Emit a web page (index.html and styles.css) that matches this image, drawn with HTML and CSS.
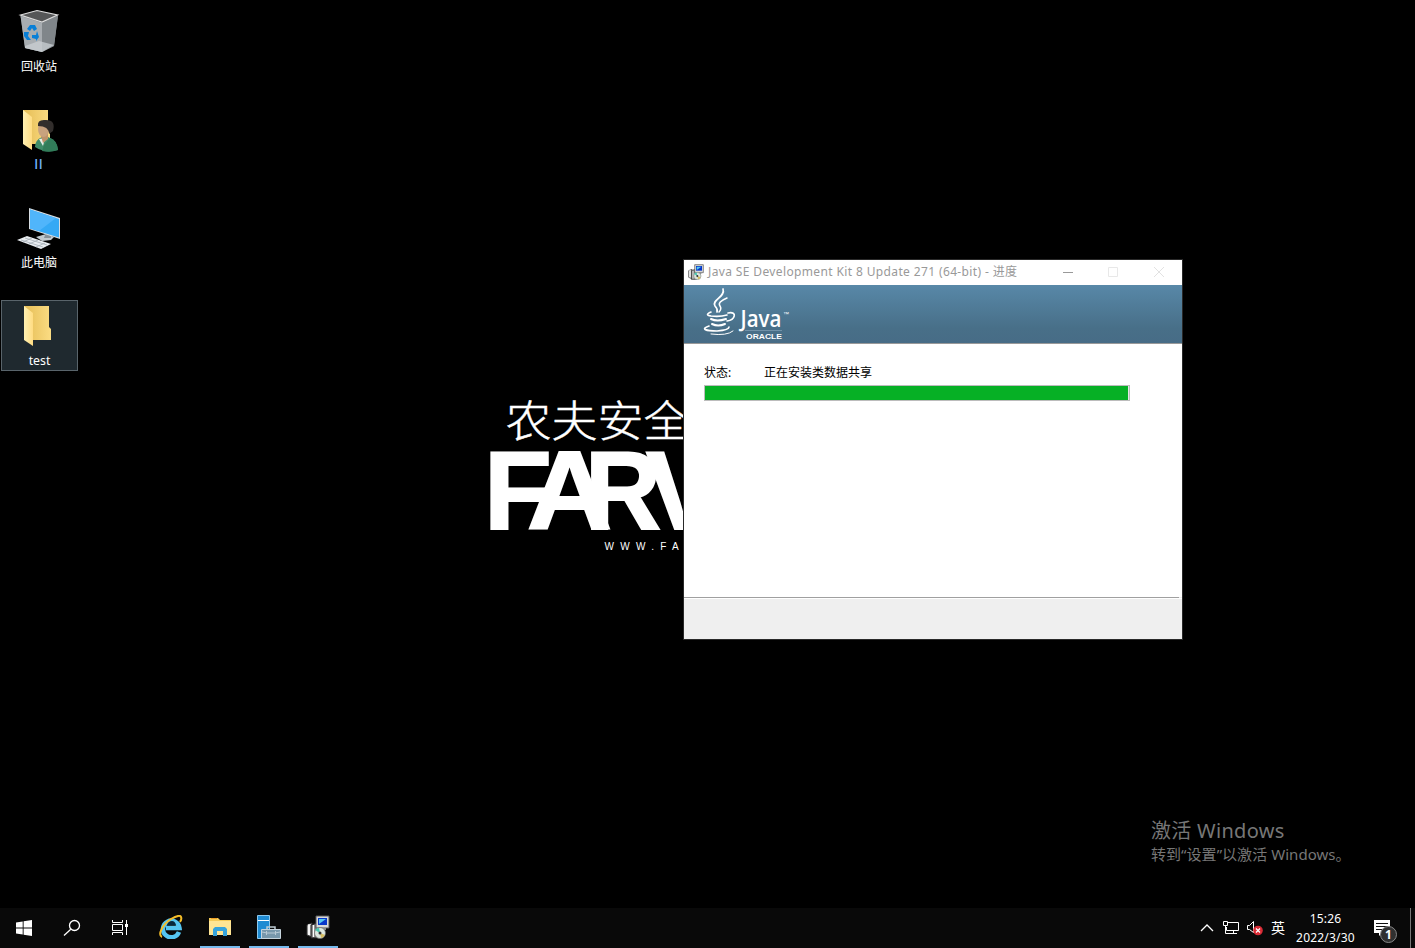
FILE: index.html
```html
<!DOCTYPE html>
<html lang="zh-CN">
<head>
<meta charset="utf-8">
<title>Java SE Development Kit</title>
<link rel="stylesheet" href="styles.css">
</head>
<body>
<svg class="defs" width="0" height="0" aria-hidden="true">
  <defs>
    <linearGradient id="gold" x1="0" x2="1"><stop offset="0" stop-color="#e5bd55"/><stop offset="1" stop-color="#fbdc83"/></linearGradient>
    <linearGradient id="flap" x1="0" x2="1"><stop offset="0" stop-color="#fff0b2"/><stop offset="1" stop-color="#ffdc82"/></linearGradient>
    <symbol id="folder" viewBox="0 0 44 44">
      <path d="M6 1H31V22L33 24V35H12L6 30Z" fill="url(#gold)"/>
      <path d="M6 1L15 8V41L6 35Z" fill="url(#flap)"/>
    </symbol>
    <symbol id="installer" viewBox="0 0 24 24">
      <path d="M1 10L6 8V22L1 20Z" fill="#dedede" stroke="#333"/>
      <path d="M5 10L11 8L13 10V23H5Z" fill="#777" stroke="#222"/>
      <path d="M3 9V20M7.5 10V22" stroke="#fff" stroke-width="1.4"/>
      <path d="M10 1H23V13H10Z" fill="#d8d8d8" stroke="#555"/>
      <path d="M12 3H21V10H12Z" fill="#0736c9"/><path d="M13 9L20 4H13Z" fill="#55c8ef"/>
      <path d="M14 13H20V15H14Z" fill="#888"/>
      <circle cx="14" cy="18" r="5.5" fill="#dce6df" stroke="#666" stroke-width=".7"/>
      <path d="M14 18L9 15A5 5 0 0 1 13 12.7Z" fill="#48c8b1"/><path d="M14 18L19 20A5 5 0 0 1 15 23Z" fill="#d5bd61"/>
      <circle cx="14" cy="18" r="1.5" fill="#333"/>
    </symbol>
  </defs>
</svg>
<main class="desktop">
  <nav class="shortcuts">
    <div class="shortcut">
      <svg class="shortcut-icon" viewBox="0 0 44 44">
        <path d="M3.500 6L24 13L41 6L37 37L25 43L8 39Z" fill="#858a8e"/>
        <path d="M3.500 6L20 1.500L40.500 6L25 13Z" fill="#555657" stroke="#ddd" stroke-width="1.2"/>
        <path d="M3.500 7L25 14V43L8 39Z" fill="#a8adb1"/><path d="M25 14L41 7L37 37L25 43Z" fill="#80868a"/>
        <path d="M8 37L22 32L37 36L25 43L8 39Z" fill="#cbd0d4" opacity=".75"/>
        <g fill="#087fd7"><path d="M10 20L13 16H18L20 20L17 22L15 19L13 22Z"/><path d="M7 23L12 23L11 27L14 31H10L7 27Z"/><path d="M20 22L22 28L19 32V30L15 29V26H19Z"/></g>
      </svg><span>回收站</span>
    </div>
    <div class="shortcut lower">
      <svg class="shortcut-icon" viewBox="0 0 44 44"><use href="#folder" width="44" height="44"/>
        <path d="M18 41Q17 31 25 28L31 28Q40 31 41 41Q29 45 18 38Z" fill="#3f8c69"/>
        <path d="M22 30L26 37L28 29Z" fill="#e7eeea"/><path d="M24 27L31 24L31 30L26 34Z" fill="#bd926a"/>
        <ellipse cx="26.500" cy="20" rx="5.500" ry="8" fill="#c8a27e"/>
        <path d="M21 17Q20 10 29 11Q39 11 36 22L32 25Q32 17 21 17Z" fill="#322e2c"/>
        <path d="M27 36L33 29Q40 31 41 41Q33 44 25 42Z" fill="#317c59"/>
      </svg><span class="user-name">ll</span>
    </div>
    <div class="shortcut lower">
      <svg class="shortcut-icon" viewBox="0 0 44 44">
        <path d="M19 30L29 27L37 30L34 33L25 34Z" fill="#c0c9cf"/><path d="M29 25L34 28V31H27Z" fill="#859199"/>
        <path d="M12 1L43 11V32L12 22Z" fill="#d7dde2"/><path d="M13 2.500L42 12V30.500L13 21.500Z" fill="#35a9f5"/>
        <path d="M13 2.500L39 11L22 24L13 21.500Z" fill="#50b5fb"/>
        <path d="M0 33L10 29L34 37L24 42Z" fill="#e9edf1"/>
        <path d="M4 33L26 40M8 31L30 38M6 35L15 31M12 37L21 33M19 40L28 36" stroke="#a5adb5" stroke-width=".8"/>
      </svg><span>此电脑</span>
    </div>
    <div class="shortcut selected"><svg class="shortcut-icon" viewBox="0 0 44 44"><use href="#folder" width="44" height="44"/></svg><span>test</span></div>
  </nav>

  <svg class="wallpaper" viewBox="0 0 204 175">
    <text class="brand-cn" transform="translate(25.5 51.5) scale(1 .93)" textLength="184" lengthAdjust="spacing">农夫安全</text>
    <g class="brand">
      <text x="4" y="144">F</text>
      <text x="47" y="144" textLength="85" lengthAdjust="spacingAndGlyphs">A</text>
      <text x="105" y="144" textLength="76" lengthAdjust="spacingAndGlyphs">R</text>
      <text x="166" y="144">V</text>
    </g>
    <text class="brand-url" x="124.500" y="164.500">WWW.FA</text>
  </svg>

  <section class="window">
    <header class="titlebar">
      <svg class="title-icon"><use href="#installer" width="16" height="16"/></svg>
      <span class="title">Java SE Development Kit 8 Update 271 (64-bit) - 进度</span>
      <svg class="controls" viewBox="0 0 114 24"><path d="M4 12.500H14" stroke="#999"/><path d="M49.500 7.500H58.500V16.500H49.500Z" fill="none" stroke="#e8e8e8"/><path d="M95 7L105 17M105 7L95 17" stroke="#e2e2e2"/></svg>
    </header>
    <div class="banner">
      <svg class="java-logo" viewBox="0 0 90 54">
        <g fill="none" stroke="#fff" stroke-linecap="round">
          <path d="M21 2C24 10 9 13 13 19Q16 22 15 25" stroke-width="1.700"/>
          <path d="M25 11Q15 15 18 19Q20 22 17 25" stroke-width="1.500"/>
          <path d="M9 25Q2 28 9 29Q18 30 25 28" stroke-width="1.600"/>
          <path d="M26 26C36 24 33 33 25 34" stroke-width="1.700"/>
          <path d="M9 32Q15 35 24 32M10 37Q16 40 23 37" stroke-width="2"/>
          <path d="M7 39C-2 42 4 44 15 44Q27 43 27 40" stroke-width="1.700"/>
          <path d="M9 47Q25 49 31 44" stroke-width="1"/>
        </g>
        <text class="java-word" x="38.500" y="40" textLength="41" lengthAdjust="spacingAndGlyphs">Java</text>
        <text class="java-tm" x="81" y="29">™</text>
        <path d="M43 43.500H80" stroke="#84a2b6" stroke-width=".7"/>
        <text class="oracle" x="44" y="51.500" textLength="36" lengthAdjust="spacingAndGlyphs">ORACLE</text>
      </svg>
    </div>
    <div class="content">
      <div class="status"><span>状态:</span><span>正在安装类数据共享</span></div>
      <div class="progress"><div class="progress-fill"></div></div>
    </div>
    <footer class="window-footer"></footer>
  </section>

  <aside class="activation"><div class="activation-title">激活 Windows</div><div class="activation-hint">转到“设置”以激活 Windows。</div></aside>
</main>

<footer class="taskbar">
  <div class="task-item"><svg width="16" height="16" fill="#fff"><path d="M0 2.400L6.700 1.400V7.500H0ZM7.600 1.200L16 0V7.500H7.600ZM0 8.500H6.700V14.600L0 13.600ZM7.600 8.500H16V16L7.600 14.800Z"/></svg></div>
  <div class="task-item"><svg width="18" height="18" fill="none" stroke="#fff" stroke-width="1.3"><circle cx="11.500" cy="6.500" r="5"/><path d="M7.800 10.300L1 16.500"/></svg></div>
  <div class="task-item"><svg width="18" height="16" fill="none" stroke="#fff"><path d="M1.500 0V2.500H11.500V0M1.500 15V12.500H11.500V15M1.500 4.500H11.500V10.500H1.500ZM15.500 0V15"/><path d="M14 4H17V7H14Z" fill="#fff" stroke="none"/></svg></div>
  <div class="task-item ie"><svg width="24" height="24" viewBox="0 0 24 24"><path d="M20 17A8.300 8.300 0 1 1 20.500 13H7" fill="none" stroke="#55c5f1" stroke-width="4.500"/><path d="M8 10Q9 6 13 6Q16 6 17 10Z" fill="#07283d"/><path d="M3 22C-2 20 4 9 12 4Q21-1 22 2Q23 4 21 7" fill="none" stroke="#f5bd28" stroke-width="2"/></svg></div>
  <div class="task-item open"><svg width="22" height="20"><path d="M0 1H9L11 3H22V18H0Z" fill="#f6cb58"/><path d="M0 4H22V18H0Z" fill="#ffe594"/><path d="M4 19V12L6 10H16L18 12V19H14V14H8V19Z" fill="#36a3dc"/><path d="M2 1.500H8" stroke="#ed9e23"/></svg></div>
  <div class="task-item open"><svg width="24" height="24"><path d="M.5.5H12.500V23.500H.5Z" fill="#1f8bd2" stroke="#8bc8ee"/><path d="M1 5.500H12" stroke="#fff"/><path d="M10 14V12H18V14" fill="none" stroke="#bdcbd4" stroke-width="1.5"/><path d="M4.500 14.500H23.500V23.500H4.500Z" fill="#7898ac" stroke="#c6d4dd"/><path d="M5 17L10 18H18L23 17M9.500 16V20M18.500 16V20" fill="none" stroke="#b8cad5"/></svg></div>
  <div class="task-item open"><svg width="24" height="24"><use href="#installer" width="24" height="24"/></svg></div>
  <div class="tray">
    <svg class="chevron" width="14" height="10" fill="none" stroke="#fff" stroke-width="1.3"><path d="M1 8L7 2L13 8"/></svg>
    <svg class="network" width="18" height="16" fill="none" stroke="#fff"><path d="M6 2.500H16.500V10.500H4.500V7M11.500 11V13.500M7 13.500H15M1.500 1.500H5.500V5.500H1.500ZM3.500 6V13.500H7"/></svg>
    <svg class="volume" width="18" height="16"><path d="M1.500 5.500H3.500L7.500 1.500V12.500L3.500 9.500H1.500Z" fill="none" stroke="#fff"/><circle cx="12" cy="10.500" r="4.800" fill="#d92b35"/><path d="M10 8.500L14 12.500M14 8.500L10 12.500" stroke="#fff" stroke-width="1.2"/></svg>
    <span class="language">英</span>
    <div class="clock"><span>15:26</span><span>2022/3/30</span></div>
    <div class="notifications"><svg width="28" height="28"><path d="M2 4H18V17H10L7 20V17H2Z" fill="#fff"/><path d="M4 7.500H16M4 10.500H16M4 13.500H11" stroke="#111"/></svg><span class="badge">1</span></div>
    <div class="show-desktop"></div>
  </div>
</footer>
</body>
</html>
```
FILE: styles.css
```css
* { box-sizing: border-box; }
body { margin: 0; width: 1415px; height: 948px; overflow: hidden; display: flex; flex-direction: column; background: #000; font: 12px/16px "Noto Sans", "Noto Sans CJK SC", sans-serif; }
svg { display: block; flex: none; }
.defs { position: absolute; }
.desktop { position: relative; height: 908px; }
.shortcuts { display: flex; flex-direction: column; gap: 27px; width: 78px; padding-top: 6px; }
.shortcut { height: 71px; display: flex; flex-direction: column; align-items: center; gap: 6px; padding-top: 3px; color: #fff; }
.shortcut-icon { width: 44px; height: 44px; }
.lower { padding-top: 5px; gap: 4px; }
.user-name { color: #70b0f8; letter-spacing: 1px; font-weight: 600; }
.selected { width: 77px; margin-left: 1px; background: #1f292f; border: 1px solid #59646b; padding-top: 4px; gap: 4px; font-size: 12.3px; }
.wallpaper { position: absolute; left: 480px; top: 385px; width: 204px; height: 175px; }
.wallpaper text { fill: #fff; }
.wallpaper .brand-cn { font: 300 46px "Noto Sans CJK SC", sans-serif; stroke: #fff; stroke-width: .5px; }
.brand { font: bold 111px "Liberation Sans", sans-serif; stroke: #fff; stroke-width: 2px; }
.wallpaper .brand-url { font: 10px "Liberation Sans", sans-serif; letter-spacing: 6.3px; }
.window { position: absolute; left: 683px; top: 259px; width: 500px; height: 381px; display: flex; flex-direction: column; border: 1px solid #292929; background: #fff; }
.titlebar { height: 25px; display: flex; align-items: center; padding: 0 0 1px 4px; color: #999; }
.title-icon { width: 16px; height: 16px; }
.title { margin-left: 4px; white-space: nowrap; letter-spacing: .37px; }
.controls { width: 114px; height: 24px; margin-left: auto; margin-right: 9px; }
.banner { height: 59px; padding: 2px 0 0 18px; background: linear-gradient(#5888a8, #486f88 75%, #476c86); border-bottom: 1px solid #999; }
.java-logo { width: 90px; height: 54px; }
.java-logo text { fill: #fff; }
.java-word { font: 600 24px "Open Sans", sans-serif; }
.java-tm { font: 6px "Liberation Sans", sans-serif; }
.oracle { font: bold 7.5px "Liberation Sans", sans-serif; }
.content { flex: 1; padding: 20px; color: #000; }
.status { display: grid; grid-template-columns: 60px auto; height: 21px; line-height: 17px; }
.progress { width: 426px; height: 16px; border: 1px solid #bcbcbc; background: #e6e6e6; }
.progress-fill { width: 423px; height: 14px; background: #06b025; }
.window-footer { height: 42px; background: linear-gradient(90deg, #a0a0a0 495px, transparent 495px) 0 0 / 100% 1px no-repeat, linear-gradient(#fff, #fff) 0 1px / 100% 1px no-repeat, #efefef; }
.activation { position: absolute; left: 1151px; top: 818px; color: #777; white-space: nowrap; }
.activation-title { font-size: 20px; line-height: 26px; letter-spacing: .3px; }
.activation-hint { font-size: 15px; line-height: 21px; letter-spacing: .05px; }
.taskbar { height: 40px; display: flex; background: #090909; color: #fff; }
.task-item { width: 48px; height: 40px; display: flex; align-items: center; justify-content: center; }
.ie { width: 54px; padding-bottom: 2px; }
.open { width: 40px; margin: 0 7px 0 2px; border-bottom: 2px solid #76b9ed; }
.tray { margin-left: auto; display: flex; align-items: center; }
.chevron { margin-right: 8px; }
.network { margin-right: 6px; }
.volume { margin-right: 7px; }
.language { width: 15px; font-size: 14px; }
.clock { width: 79px; margin-right: 7px; display: flex; flex-direction: column; align-items: center; line-height: 19px; padding-bottom: 1px; letter-spacing: .2px; }
.notifications { position: relative; width: 38px; height: 40px; padding: 8px 0; }
.badge { position: absolute; left: 8px; top: 18px; width: 17px; height: 17px; border: 1px solid #888; border-radius: 50%; background: #303030; text-align: center; line-height: 15px; font-weight: bold; }
.show-desktop { width: 5px; height: 40px; border-left: 1px solid #777; }
```
